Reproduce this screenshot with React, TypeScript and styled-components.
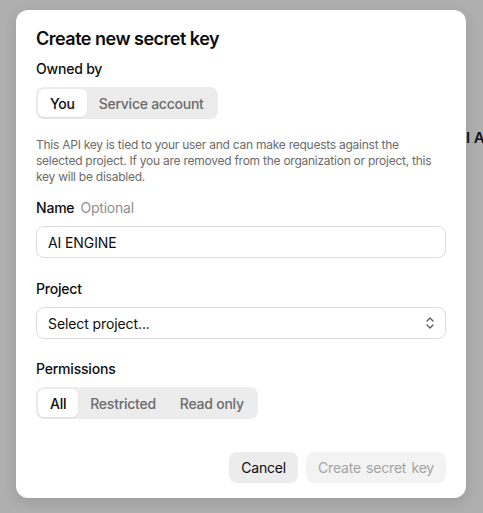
import React, { useState } from "react";
import styled, { createGlobalStyle } from "styled-components";

const GlobalStyle = createGlobalStyle`
  html, body {
    margin: 0;
    padding: 0;
    background: #afafaf;
    height: 513px;
    overflow: hidden;
  }
  body {
    font-family: Inter, "Noto Sans", "Liberation Sans", sans-serif;
    color: #0d0d0d;
    -webkit-font-smoothing: antialiased;
  }
  * { box-sizing: border-box; }
`;

const Page = styled.div`
  position: relative;
  width: 483px;
  height: 513px;
  padding: 10px 0 0 16px;
`;

const BackdropText = styled.div`
  position: absolute;
  left: 455px;
  top: 128px;
  font-size: 15px;
  font-weight: 600;
  color: #111;
  white-space: nowrap;
  z-index: 0;
`;

const Dialog = styled.div`
  position: relative;
  z-index: 1;
  width: 450px;
  background: #ffffff;
  border-radius: 12px;
  padding: 17px 20px 15px;
  display: flex;
  flex-direction: column;
  box-shadow: 0 4px 14px rgba(0, 0, 0, 0.12);
`;

const Title = styled.h2`
  margin: 0;
  font-size: 18px;
  line-height: 24px;
  font-weight: 600;
  letter-spacing: -0.5px;
`;

const Field = styled.div<{ $top: number }>`
  display: flex;
  flex-direction: column;
  margin-top: ${(p) => p.$top}px;
`;

const Label = styled.div`
  font-size: 14px;
  line-height: 20px;
  font-weight: 500;
  letter-spacing: -0.2px;
  margin-bottom: 8px;
  display: flex;
  gap: 6px;
`;

const Hint = styled.span`
  font-weight: 400;
  color: #8f8f8f;
`;

const Segmented = styled.div`
  display: inline-flex;
  align-self: flex-start;
  background: #ececec;
  border-radius: 8px;
  padding: 2px;
  height: 32px;
`;

const SegButton = styled.button<{ $active: boolean }>`
  border: none;
  font-family: inherit;
  font-size: 14px;
  font-weight: 500;
  letter-spacing: -0.25px;
  padding: 0 12px;
  border-radius: 6px;
  cursor: pointer;
  background: ${(p) => (p.$active ? "#ffffff" : "transparent")};
  color: ${(p) => (p.$active ? "#0d0d0d" : "#6b6b6b")};
  box-shadow: ${(p) => (p.$active ? "0 1px 2px rgba(0,0,0,0.08)" : "none")};
`;

const Description = styled.p`
  margin: 18px 0 0;
  font-size: 12px;
  line-height: 16px;
  letter-spacing: -0.25px;
  color: #6b6b6b;
`;

const InputBox = styled.div`
  height: 32px;
  border: 1px solid #dcdcdc;
  border-radius: 8px;
  display: flex;
  align-items: center;
  padding: 0 10px 0 11px;
  font-size: 14px;
  letter-spacing: -0.1px;
  color: #0d0d0d;
  justify-content: space-between;
`;

const Footer = styled.div`
  margin-top: 33px;
  display: flex;
  justify-content: flex-end;
  gap: 8px;
`;

const Button = styled.button<{ $disabled?: boolean }>`
  height: 31px;
  border: none;
  border-radius: 8px;
  padding: 0 12px;
  font-family: inherit;
  font-size: 14px;
  font-weight: 400;
  letter-spacing: -0.2px;
  background: ${(p) => (p.$disabled ? "#f3f3f3" : "#ececec")};
  color: ${(p) => (p.$disabled ? "#a3a3a3" : "#0d0d0d")};
  word-spacing: ${(p) => (p.$disabled ? "1.5px" : "0")};
  cursor: ${(p) => (p.$disabled ? "default" : "pointer")};
`;

const Chevrons = () => (
  <svg width="10" height="14" viewBox="0 0 10 14" fill="none" stroke="#5d5d5d" strokeWidth="1.4" strokeLinecap="round" strokeLinejoin="round">
    <path d="M2 5 L5 2 L8 5" />
    <path d="M2 9 L5 12 L8 9" />
  </svg>
);

export default function App() {
  const [owner, setOwner] = useState("You");
  const [perm, setPerm] = useState("All");
  return (
    <>
      <GlobalStyle />
      <Page>
        <BackdropText>AI API</BackdropText>
        <Dialog>
          <Title>Create new secret key</Title>
          <Field $top={8}>
            <Label>Owned by</Label>
            <Segmented>
              {["You", "Service account"].map((o) => (
                <SegButton key={o} $active={owner === o} onClick={() => setOwner(o)}>
                  {o}
                </SegButton>
              ))}
            </Segmented>
          </Field>
          <Description>
            This API key is tied to your user and can make requests against the selected project. If you are
            removed from the organization or project, this key will be disabled.
          </Description>
          <Field $top={13}>
            <Label>
              Name <Hint>Optional</Hint>
            </Label>
            <InputBox>AI ENGINE</InputBox>
          </Field>
          <Field $top={21}>
            <Label>Project</Label>
            <InputBox>
              Select project...
              <Chevrons />
            </InputBox>
          </Field>
          <Field $top={20}>
            <Label>Permissions</Label>
            <Segmented>
              {["All", "Restricted", "Read only"].map((o) => (
                <SegButton key={o} $active={perm === o} onClick={() => setPerm(o)}>
                  {o}
                </SegButton>
              ))}
            </Segmented>
          </Field>
          <Footer>
            <Button>Cancel</Button>
            <Button $disabled>Create secret key</Button>
          </Footer>
        </Dialog>
      </Page>
    </>
  );
}
